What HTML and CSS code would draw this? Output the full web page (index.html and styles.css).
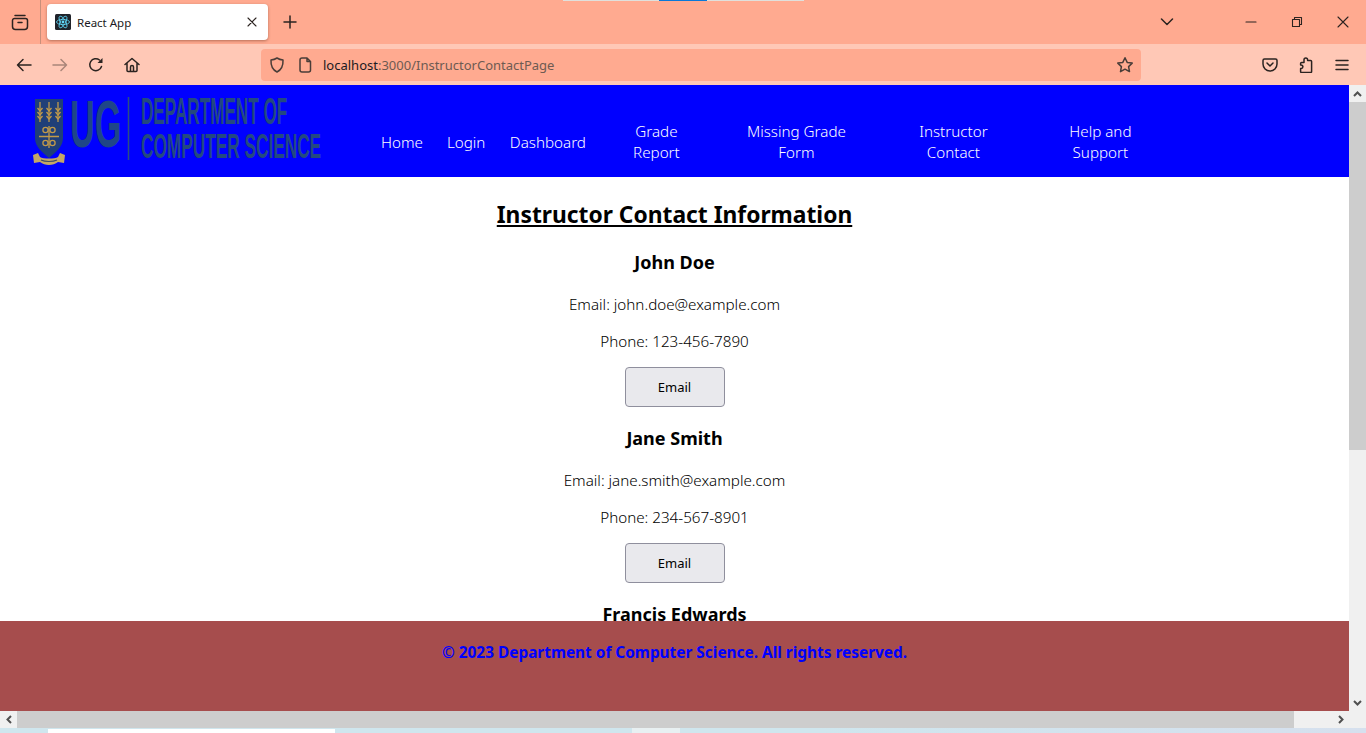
FILE: index.html
```html
<!DOCTYPE html>
<html>
<head>
    <title>React App</title>
    <link rel="stylesheet" href="styles.css">
</head>
<body>
    <div class="window">
        <div class="top-strip"><span class="strip-grey"></span><span class="strip-blue"></span><span class="strip-grey short"></span></div>

        <!-- tab row -->
        <div class="tabbar">
            <div class="tab-list-btn">
                <svg width="18" height="18" viewBox="0 0 18 18" class="ico"><path d="M4 2.500h10M1.500 7.500a2 2 0 0 1 2-2h11a2 2 0 0 1 2 2v6a3 3 0 0 1-3 3h-9a3 3 0 0 1-3-3zM7 9.500h4"/></svg>
            </div>
            <div class="tab">
                <svg class="favicon" width="16" height="16" viewBox="0 0 16 16">
                    <rect width="16" height="16" rx="1.500" fill="#20232a"/>
                    <g fill="none" stroke="#61dafb" stroke-width="0.8">
                        <ellipse cx="8" cy="8" rx="6.500" ry="2.600"/>
                        <ellipse cx="8" cy="8" rx="6.500" ry="2.600" transform="rotate(60 8 8)"/>
                        <ellipse cx="8" cy="8" rx="6.500" ry="2.600" transform="rotate(120 8 8)"/>
                    </g>
                    <circle cx="8" cy="8" r="1.400" fill="#61dafb"/>
                </svg>
                <span class="tab-title">React App</span>
                <svg width="10" height="10" viewBox="0 0 10 10" class="ico thin"><path d="M1 1l8 8M9 1l-8 8"/></svg>
            </div>
            <div class="new-tab">
                <svg width="14" height="14" viewBox="0 0 14 14" class="ico"><path d="M7 1v12M1 7h12"/></svg>
            </div>
            <div class="spacer"></div>
            <div class="tab-menu">
                <svg width="14" height="8" viewBox="0 0 14 8" class="ico"><path d="M1.500 1l5.500 5.500L12.500 1"/></svg>
            </div>
            <div class="win-btn first"><svg width="12" height="2" viewBox="0 0 12 2" class="ico thin"><path d="M1 1h10"/></svg></div>
            <div class="win-btn"><svg width="12" height="12" viewBox="0 0 12 12" class="ico thin"><path d="M1.500 3.500h7v7h-7zM3.500 3.500v-2h7v7h-2"/></svg></div>
            <div class="win-btn"><svg width="12" height="12" viewBox="0 0 12 12" class="ico thin"><path d="M1 1l10 10M11 1L1 11"/></svg></div>
        </div>

        <!-- address row -->
        <div class="toolbar">
            <div class="tool-btn"><svg width="16" height="14" viewBox="0 0 16 14" class="ico"><path d="M15 7H1.500M7 1.500L1.500 7 7 12.500"/></svg></div>
            <div class="tool-btn faded"><svg width="16" height="14" viewBox="0 0 16 14" class="ico"><path d="M1 7h13.500M9 1.500L14.500 7 9 12.500"/></svg></div>
            <div class="tool-btn">
                <svg width="16" height="16" viewBox="0 0 16 16" class="ico"><path d="M13.500 9.500A6 6 0 1 1 11.500 3"/><path class="solid" d="M14.500 1v5h-5z"/></svg>
            </div>
            <div class="tool-btn">
                <svg width="16" height="16" viewBox="0 0 16 16" class="ico"><path d="M1 7.500L8 1.500l7 6M3 6v7.500a1 1 0 0 0 1 1h8a1 1 0 0 0 1-1V6M6.500 14.500V10a1.500 1.500 0 0 1 3 0v4.500"/></svg>
            </div>
            <div class="urlbar">
                <svg width="16" height="16" viewBox="0 0 16 16" class="ico dim"><path d="M8 1c2 1.300 4 1.800 6 2 .3 5.500-1.500 9.800-6 12C3.500 12.800 1.700 8.500 2 3c2-.2 4-.7 6-2z"/></svg>
                <svg class="ico dim page-ico" width="16" height="16" viewBox="0 0 16 16"><path d="M3 3a2 2 0 0 1 2-2h5l3.500 3.500V13a2 2 0 0 1-2 2H5a2 2 0 0 1-2-2zM10 1v3.500h3.500"/></svg>
                <span class="url"><span class="host">localhost</span>:3000/InstructorContactPage</span>
                <svg width="18" height="18" viewBox="0 0 18 18" class="ico dim"><path d="M9 1.800l2.200 4.600 5 .7-3.600 3.500.9 5L9 13.200l-4.500 2.400.9-5-3.600-3.500 5-.7z"/></svg>
            </div>
            <div class="tool-btn pocket">
                <svg width="16" height="16" viewBox="0 0 16 16" class="ico"><path d="M1 3.500a1.500 1.500 0 0 1 1.500-1.500h11A1.500 1.500 0 0 1 15 3.500V7a7 7 0 0 1-14 0zM5 6l3 3 3-3"/></svg>
            </div>
            <div class="tool-btn">
                <svg width="16" height="16" viewBox="0 0 16 16" class="ico"><path d="M6 3.500V2.800a1.800 1.800 0 0 1 3.600 0v.7h3a1 1 0 0 1 1 1v10a1 1 0 0 1-1 1h-9a1 1 0 0 1-1-1v-3h.6a1.700 1.700 0 0 0 0-3.400h-.6V6.500a1 1 0 0 1 1-1H6z"/></svg>
            </div>
            <div class="tool-btn">
                <svg width="14" height="12" viewBox="0 0 14 12" class="ico"><path d="M1 1.500h12M1 6h12M1 10.500h12"/></svg>
            </div>
        </div>

        <div class="page-row">
            <div class="page">
                <header class="site-header">
                    <svg class="logo" width="294" height="92" viewBox="30 85 294 92">
                        <!-- crest -->
                        <path d="M35 99h28v39c0 9-8 15-14 20-6-5-14-11-14-20z" fill="#1f3f78"/>
                        <g fill="none" stroke="#c09a4a" stroke-width="1.300">
                            <path d="M40 102v20M49 102v20M58 102v20"/>
                            <path d="M37.500 108l2.500 3 2.500-3M37.500 112l2.500 3 2.500-3M37.500 116l2.500 3 2.500-3"/>
                            <path d="M46.500 108l2.500 3 2.500-3M46.500 112l2.500 3 2.500-3M46.500 116l2.500 3 2.500-3"/>
                            <path d="M55.500 108l2.500 3 2.500-3M55.500 112l2.500 3 2.500-3M55.500 116l2.500 3 2.500-3"/>
                            <path d="M39 136.500h20M49 126v22"/>
                            <circle cx="45.500" cy="130" r="2.600"/>
                            <circle cx="52.500" cy="130" r="2.600"/>
                            <circle cx="45.500" cy="143" r="2.600"/>
                            <circle cx="52.500" cy="143" r="2.600"/>
                        </g>
                        <path d="M33 155l5-2 2 4c3 2 15 2 18 0l2-4 5 2-1 8-6-1c-5 4-13 4-18 0l-6 1z" fill="#c4a766"/>
                        <path d="M41 160c4 2 12 2 16 0" fill="none" stroke="#3d4a66" stroke-width="1.200"/>
                        <!-- wordmark -->
                        <text class="logo-ug" transform="translate(70 147) scale(0.52 1)">UG</text>
                        <path d="M128.500 97v63" stroke="#2a5080" stroke-width="1.500"/>
                        <text class="logo-name" transform="translate(141 124) scale(0.476 1)">DEPARTMENT OF</text>
                        <text class="logo-name" transform="translate(141 158) scale(0.479 1)">COMPUTER SCIENCE</text>
                    </svg>
                    <nav class="site-nav">
                        <a class="nav-link">Home</a>
                        <a class="nav-link">Login</a>
                        <a class="nav-link w-dash">Dashboard</a>
                        <a class="nav-link w-grade">Grade Report</a>
                        <a class="nav-link w-missing">Missing Grade Form</a>
                        <a class="nav-link w-contact">Instructor Contact</a>
                        <a class="nav-link w-help">Help and Support</a>
                    </nav>
                </header>

                <main class="content">
                    <h1>Instructor Contact Information</h1>
                    <div class="instructor">
                        <h3>John Doe</h3>
                        <p>Email: john.doe@example.com</p>
                        <p>Phone: 123-456-7890</p>
                        <button class="email-btn">Email</button>
                    </div>
                    <div class="instructor">
                        <h3>Jane Smith</h3>
                        <p>Email: jane.smith@example.com</p>
                        <p>Phone: 234-567-8901</p>
                        <button class="email-btn">Email</button>
                    </div>
                    <div class="instructor">
                        <h3>Francis Edwards</h3>
                    </div>
                </main>

                <footer class="site-footer">© 2023 Department of Computer Science. All rights reserved.</footer>
            </div>
            <div class="vscroll">
                <div class="sb-btn"><svg width="9" height="6" viewBox="0 0 9 6" class="arrow"><path d="M1 5l3.500-3.500L8 5"/></svg></div>
                <div class="vthumb"></div>
                <div class="spacer"></div>
                <div class="sb-btn"><svg width="9" height="6" viewBox="0 0 9 6" class="arrow"><path d="M1 1l3.500 3.500L8 1"/></svg></div>
            </div>
        </div>

        <div class="hscroll">
            <div class="sb-btn"><svg width="6" height="9" viewBox="0 0 6 9" class="arrow"><path d="M5 1L1.500 4.500 5 8"/></svg></div>
            <div class="hthumb"></div>
            <div class="spacer"></div>
            <div class="sb-btn"><svg width="6" height="9" viewBox="0 0 6 9" class="arrow"><path d="M1 1l3.500 3.500L1 8"/></svg></div>
            <div class="sb-btn"></div>
        </div>

        <div class="under-strip"><span class="under-white"></span><span class="under-light"></span></div>
    </div>
</body>
</html>
```

FILE: styles.css
```css
html, body {
    margin: 0;
    padding: 0;
    height: 100%;
    overflow: hidden;
}

body {
    font-family: "Noto Sans", sans-serif;
    color: #000;
}

.window {
    position: relative;
    display: flex;
    flex-direction: column;
    height: 733px;
}

.spacer {
    flex: 1;
}

/* icons */
.ico {
    fill: none;
    stroke: #2b2320;
    stroke-width: 1.5;
    stroke-linecap: round;
    stroke-linejoin: round;
    flex: none;
}

.ico.thin {
    stroke-width: 1.1;
}

.ico.dim {
    stroke: #4a3d38;
}

.ico .solid {
    fill: #2b2320;
    stroke: none;
}

/* thin line of the desktop behind the window */
.top-strip {
    position: absolute;
    top: 0;
    left: 563px;
    display: flex;
    height: 1px;
}

.strip-grey {
    width: 96px;
    background: #e0e0dc;
}

.strip-grey.short {
    width: 97px;
}

.strip-blue {
    width: 48px;
    background: #0a78d7;
}

/* tab row */
.tabbar {
    display: flex;
    align-items: center;
    height: 44px;
    background: #ffaa90;
    flex: none;
}

.tab-list-btn {
    display: flex;
    align-items: center;
    justify-content: center;
    width: 40px;
    height: 44px;
    margin-right: 2px;
    border-right: 1px solid #c98f7a;
}

.tab {
    display: flex;
    align-items: center;
    width: 221px;
    height: 36px;
    margin-left: 4px;
    padding: 0 11px 0 8px;
    box-sizing: border-box;
    background: #fff;
    border-radius: 4px;
    box-shadow: 0 1px 3px rgba(90, 40, 20, 0.45);
}

.favicon {
    flex: none;
}

.tab-title {
    flex: 1;
    margin-left: 6px;
    font-size: 11.5px;
    color: #1c1b22;
}

.new-tab {
    display: flex;
    align-items: center;
    justify-content: center;
    width: 32px;
    margin-left: 6px;
}

.tab-menu {
    display: flex;
    justify-content: center;
    width: 32px;
}

.win-btn {
    display: flex;
    justify-content: center;
    width: 46px;
}

.win-btn.first {
    margin-left: 45px;
}

/* address row */
.toolbar {
    display: flex;
    align-items: center;
    height: 41px;
    padding-left: 6px;
    background: #ffc8b6;
    flex: none;
}

.tool-btn {
    display: flex;
    align-items: center;
    justify-content: center;
    width: 36px;
}

.tool-btn.faded {
    opacity: 0.4;
}

.tool-btn.pocket {
    margin-left: 111px;
}

.urlbar {
    display: flex;
    align-items: center;
    width: 880px;
    height: 32px;
    margin-left: 111px;
    padding: 0 7px 0 8px;
    box-sizing: border-box;
    background: #ffaa90;
    border-radius: 4px;
}

.page-ico {
    margin-left: 12px;
}

.url {
    flex: 1;
    margin-left: 10px;
    font-size: 13px;
    color: #6e5a52;
}

.host {
    color: #1c1b22;
}

/* page */
.page-row {
    display: flex;
    height: 626px;
    flex: none;
}

.page {
    position: relative;
    flex: 1;
    overflow: hidden;
    background: #fff;
}

.site-header {
    display: flex;
    align-items: center;
    height: 92px;
    padding-left: 30px;
    background: #0000ff;
}

.logo {
    flex: none;
}

.logo-ug {
    font-family: "Liberation Sans", sans-serif;
    font-size: 66px;
    font-weight: bold;
    fill: #1f4687;
}

.logo-name {
    font-family: "Liberation Sans", sans-serif;
    font-size: 36px;
    font-weight: bold;
    fill: #23497f;
}

.site-nav {
    display: flex;
    align-items: center;
    gap: 24px;
    margin-left: 57px;
    margin-top: 22px;
}

.nav-link {
    flex: none;
    color: #fff;
    font-size: 15.2px;
    font-weight: 300;
    line-height: 21px;
    text-align: center;
}

.w-dash {
    width: 77px;
}

.w-grade {
    width: 92px;
    padding: 0 20px;
    box-sizing: border-box;
}

.w-missing {
    width: 140px;
    padding: 0 16px;
    box-sizing: border-box;
}

.w-contact {
    width: 126px;
    padding: 0 20px;
    box-sizing: border-box;
}

.w-help {
    width: 120px;
    padding: 0 20px;
    box-sizing: border-box;
}

.content {
    padding-top: 22px;
    text-align: center;
}

h1 {
    margin: 0;
    font-size: 22.8px;
    line-height: 32px;
    font-weight: bold;
    text-decoration: underline;
}

.instructor {
    padding-top: 18px;
}

h3 {
    margin: 0 0 19px;
    font-size: 18px;
    line-height: 26px;
    font-weight: bold;
}

.instructor p {
    margin: 0 0 16px;
    font-size: 15.2px;
    font-weight: 300;
    line-height: 21px;
}

.instructor p + p {
    margin-bottom: 15px;
}

.email-btn {
    display: block;
    width: 100px;
    height: 40px;
    margin: 0 auto;
    padding: 0;
    font-family: "Noto Sans", sans-serif;
    font-size: 13px;
    color: #000;
    background: #e9e9ed;
    border: 1px solid #8f8f9d;
    border-radius: 4px;
}

/* stuck to the bottom of the page, over the list */
.site-footer {
    position: absolute;
    left: 0;
    right: 0;
    bottom: 0;
    height: 90px;
    padding-top: 21px;
    box-sizing: border-box;
    background: #a64d4d;
    color: #0000ff;
    font-size: 15.4px;
    font-weight: bold;
    line-height: 22px;
    text-align: center;
}

/* scrollbars */
.sb-btn {
    display: flex;
    align-items: center;
    justify-content: center;
    width: 17px;
    height: 17px;
    flex: none;
    background: #f0f0f0;
}

.arrow {
    fill: none;
    stroke: #505050;
    stroke-width: 2;
}

.vscroll {
    display: flex;
    flex-direction: column;
    width: 17px;
    background: #f0f0f0;
    flex: none;
}

.vthumb {
    height: 348px;
    background: #cdcdcd;
}

.hscroll {
    display: flex;
    height: 17px;
    background: #f0f0f0;
    flex: none;
}

.hthumb {
    width: 1277px;
    background: #cdcdcd;
}

.under-strip {
    display: flex;
    height: 5px;
    padding-left: 48px;
    background: linear-gradient(to right, #cfe6ee, #cfe6ee 60%, #d6e0ee);
}

.under-white {
    width: 287px;
    margin-top: 1px;
    background: #fff;
}

.under-light {
    width: 48px;
    margin-left: 297px;
    background: #e8f0f2;
}
```
